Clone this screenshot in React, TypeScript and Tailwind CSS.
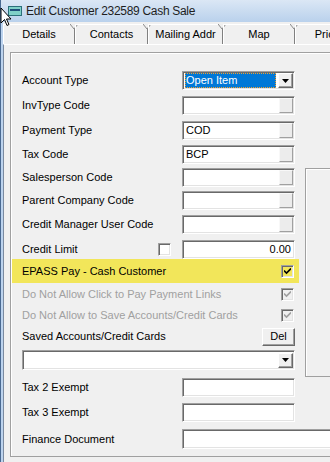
import React from 'react';

const sunken =
  'border border-t-[#a0a0a0] border-l-[#a0a0a0] border-r-white border-b-white shadow-[inset_1px_1px_0_#696969,inset_-1px_-1px_0_#e3e3e3]';
const raised =
  'border border-t-white border-l-white border-r-[#696969] border-b-[#696969] shadow-[inset_-1px_-1px_0_#a0a0a0] bg-[#f0f0f0]';

const Arrow = () => (
  <div className={`${raised} w-[15px] h-[15px] flex items-center justify-center`}>
    <svg width="7" height="4" viewBox="0 0 7 4">
      <path d="M0 0h7L3.5 4z" fill="#000" />
    </svg>
  </div>
);

const Field = ({
  value,
  button,
  right,
  className = 'w-[113px] h-[19px]',
}: {
  value?: string;
  button?: boolean;
  right?: boolean;
  className?: string;
}) => (
  <div className={`${sunken} ${className} bg-white flex items-center pl-[3px] pr-[1px]`}>
    <span className={`flex-1 leading-none ${right ? 'text-right pr-[2px]' : ''}`}>{value}</span>
    {button && <div className="w-[14px] h-[15px] bg-[#ececec] border border-[#f8f8f8] border-r-[#a0a0a0] border-b-[#a0a0a0]" />}
  </div>
);

const Check = ({ checked, disabled, bg = 'bg-white' }: { checked?: boolean; disabled?: boolean; bg?: string }) => (
  <div className={`${sunken} ${disabled ? 'bg-[#f0f0f0]' : bg} w-[13px] h-[13px] flex items-center justify-center`}>
    {checked && (
      <svg width="7" height="7" viewBox="0 0 7 7">
        <path d="M0 2.5l2.5 2.5L7 0.5" stroke={disabled ? '#a0a0a0' : '#000'} strokeWidth="1.6" fill="none" />
      </svg>
    )}
  </div>
);

const Row = ({ label, mt, children }: { label: string; mt: string; children?: React.ReactNode }) => (
  <div className={`flex items-center h-[19px] pl-[10px] ${mt}`}>
    <span className="w-[160px] shrink-0">{label}</span>
    {children}
  </div>
);

const tabs = [
  { t: 'Details', w: 'w-[72px]' },
  { t: 'Contacts', w: 'w-[73px]' },
  { t: 'Mailing Addr', w: 'w-[75px]' },
  { t: 'Map', w: 'w-[72px]' },
  { t: 'Pricing', w: 'w-[73px]' },
];

export default function App() {
  return (
    <div className="relative w-[330px] h-[462px] overflow-hidden bg-[#f0f0f0] text-[11px] text-black font-['Liberation_Sans',Arial,sans-serif]">
      {/* Title bar */}
      <div className="h-[22px] flex items-center bg-gradient-to-b from-[#dbe7f5] to-[#b9d1ec] border-l border-[#4a6a92]">
        <svg width="14" height="12" viewBox="0 0 14 12" className="ml-[7px] shrink-0">
          <rect x="0.5" y="1.5" width="13" height="9" fill="#7fd0c8" stroke="#2b6f7a" />
          <rect x="2" y="4" width="10" height="2" fill="#1f4f7a" />
        </svg>
        <span className="ml-[4px] text-[12px] tracking-[-0.3px] text-[#1e1e1e]">Edit Customer 232589 Cash Sale</span>
      </div>

      <div className="flex h-[440px]">
        {/* left window frame */}
        <div className="w-[1px] shrink-0 bg-[#4a6a92]" />
        <div className="w-[2px] shrink-0 bg-[#bcd3ee]" />

        <div className="flex-1 min-w-0 flex flex-col">
          {/* Tabs */}
          <div className="h-[22px] flex items-end">
            {tabs.map((tab, i) => (
              <div
                key={tab.t}
                className={`relative h-[20px] ${tab.w} shrink-0 flex items-center justify-center whitespace-nowrap border-t border-l border-t-white border-l-white border-r border-r-[#808080] ${i === 0 ? 'border-l-[#7a8aa0]' : ''}`}
              >
                {tab.t}
                <svg width="8" height="5" viewBox="0 0 8 5" className="absolute -right-[4px] -top-[1px]">
                  <path d="M0 0L4 5L8 0" stroke="#8a8a8a" fill="#f0f0f0" />
                </svg>
              </div>
            ))}
          </div>

          {/* Tab page */}
          <div className="flex-1 border-t border-white border-l border-l-[#7a8aa0] pt-[7px] pl-[6px]">
            <div className="border border-[#a0a0a0] border-r-0 shadow-[inset_1px_1px_0_#fff] pt-[18px] pb-[7px] flex">
              <div className="w-[292px] shrink-0 pl-[1px]">
                <Row label="Account Type" mt="">
                  <div className={`${sunken} w-[113px] h-[19px] bg-white flex items-center pl-[2px] pr-[1px]`}>
                    <div className="flex-1 h-[15px] bg-[#0078d7] text-white outline outline-1 outline-dotted outline-[#f0a030] -outline-offset-1 flex items-center pl-[1px] mr-[2px]">
                      Open Item
                    </div>
                    <Arrow />
                  </div>
                </Row>
                <Row label="InvType Code" mt="mt-[6px]">
                  <Field button />
                </Row>
                <Row label="Payment Type" mt="mt-[6px]">
                  <Field value="COD" button />
                </Row>
                <Row label="Tax Code" mt="mt-[5px]">
                  <Field value="BCP" button />
                </Row>
                <Row label="Salesperson Code" mt="mt-[4px]">
                  <Field button />
                </Row>
                <Row label="Parent Company Code" mt="mt-[4px]">
                  <Field button />
                </Row>
                <Row label="Credit Manager User Code" mt="mt-[5px]">
                  <Field button />
                </Row>
                <div className="flex items-center h-[19px] pl-[10px] mt-[6px]">
                  <span className="w-[136px] shrink-0">Credit Limit</span>
                  <div className="w-[24px] shrink-0">
                    <Check />
                  </div>
                  <Field value="0.00" right />
                </div>

                <div className="w-[287px] h-[24px] bg-[#f2e65a] flex items-center pl-[10px]">
                  <span className="flex-1">EPASS Pay - Cash Customer</span>
                  <div className="mr-[5px]">
                    <Check checked bg="bg-[#f2e65a]" />
                  </div>
                </div>
                <div className="h-[21px] mt-[1px] flex items-center pl-[10px] w-[287px] text-[#a0a0a0]">
                  <span className="flex-1">Do Not Allow Click to Pay Payment Links</span>
                  <div className="mr-[5px]">
                    <Check checked disabled />
                  </div>
                </div>
                <div className="h-[21px] flex items-center pl-[10px] w-[287px] text-[#a0a0a0]">
                  <span className="flex-1">Do Not Allow to Save Accounts/Credit Cards</span>
                  <div className="mr-[5px]">
                    <Check checked disabled />
                  </div>
                </div>
                <div className="h-[19px] mt-[1px] flex items-center pl-[10px] w-[283px]">
                  <span className="flex-1">Saved Accounts/Credit Cards</span>
                  <div className={`${raised} w-[33px] h-[18px] flex items-center justify-center`}>Del</div>
                </div>
                <div className="ml-[10px] mt-[4px]">
                  <div className={`${sunken} w-[273px] h-[20px] bg-white flex items-center justify-end pr-[1px]`}>
                    <Arrow />
                  </div>
                </div>
                <Row label="Tax 2 Exempt" mt="mt-[8px]">
                  <Field />
                </Row>
                <Row label="Tax 3 Exempt" mt="mt-[6px]">
                  <Field />
                </Row>
                <div className="flex items-center h-[20px] pl-[10px] mt-[7px]">
                  <span className="w-[160px] shrink-0">Finance Document</span>
                  <Field className="w-[160px] h-[20px] shrink-0" />
                </div>
              </div>

              {/* right side panel */}
              <div className="mt-[97px] ml-[2px] w-[40px] h-[209px] shrink-0 border border-[#a0a0a0] border-r-0 shadow-[inset_1px_1px_0_#fff]" />
            </div>
          </div>
        </div>
      </div>

      {/* mouse pointer */}
      <svg width="13" height="20" viewBox="0 0 13 20" className="absolute left-0 top-[7px]">
        <path d="M1 1v15l3.5-3.5 2.5 6 2-1-2.5-5.5H11z" fill="#fff" stroke="#000" strokeWidth="1" strokeLinejoin="round" />
      </svg>
    </div>
  );
}
